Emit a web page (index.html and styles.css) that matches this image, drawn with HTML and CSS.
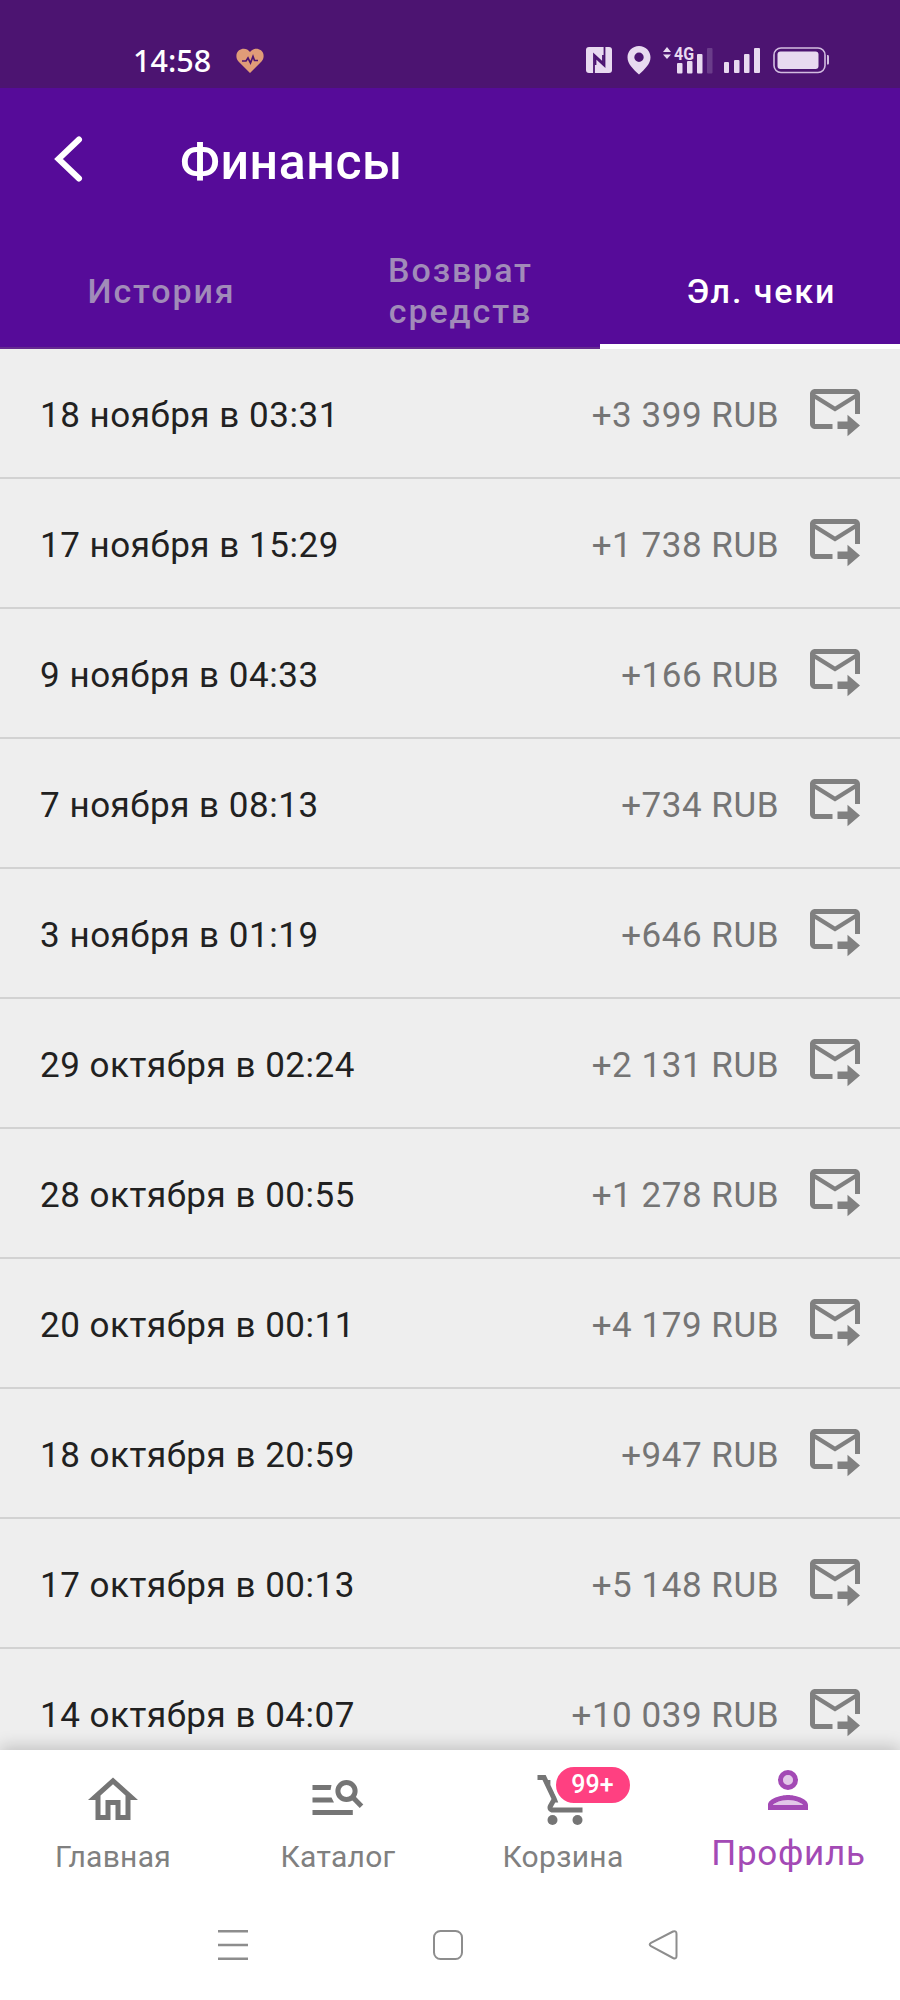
FILE: index.html
```html
<!DOCTYPE html>
<html lang="ru">
<head>
<meta charset="utf-8">
<title>Финансы</title>
<link rel="stylesheet" href="styles.css">
</head>
<body>
<svg class="defs" aria-hidden="true">
  <symbol id="mail" viewBox="0 0 24 24">
    <path d="M20 4H4C2.9 4 2 4.900 2 6V18C2 19.100 2.900 20 4 20H11V18H4V8L12 13L20 8V14H22V6C22 4.900 21.100 4 20 4ZM12 11L4 6H20ZM17 14.300L22 18.600L17 22.900V20H13V17H17Z"/>
  </symbol>
</svg>
<div class="screen">
  <header class="header">
    <div class="status">
      <span class="clock">14:58</span>
      <svg class="heart" width="28" height="26" viewBox="0 0 28 26"><path d="M14 25L2.500 13.500C-.500 10-.300 5 3 2.300C6.500-.400 11.500.300 14 4C16.500.300 21.500-.400 25 2.300C28.300 5 28.500 10 25.500 13.500Z" fill="#e09c78"/><path d="M6 13H10L12 10L14.500 15L17 8.500L18.500 12.500H22" fill="none" stroke="#4c1471" stroke-width="1.700"/></svg>
      <div class="indicators">
        <svg class="nfc" width="26" height="26" viewBox="0 0 26 26"><rect width="26" height="26" rx="3" fill="#e8daf0"/><path d="M8 26V7.500L17 16V8" fill="none" stroke="#4c1471" stroke-width="1.800"/><path d="M18.500 0V19L9.500 10.500V18" fill="none" stroke="#4c1471" stroke-width="1.800"/></svg>
        <svg class="pin" width="24" height="29" viewBox="0 0 24 29"><path fill="#e8daf0" fill-rule="evenodd" d="M12 0C5.400 0 .500 5 .500 11.300C.500 18 6 23 12 28.500C18 23 23.500 18 23.500 11.300C23.500 5 18.600 0 12 0ZM12 6.500A4.700 4.700 0 1 1 12 15.900A4.700 4.700 0 0 1 12 6.500Z"/></svg>
        <svg class="cell" width="52" height="32" viewBox="0 -4 52 32" fill="#e8daf0"><path d="M1 6L5 1L9 6ZM1 8.500H9L5 13Z"/><rect x="15" y="17" width="5.500" height="10.500" rx="1"/><rect x="25" y="15" width="5.500" height="12.500" rx="1"/><rect x="35" y="8" width="5.500" height="19.500" rx="1"/><rect x="45" y="2" width="5.500" height="25.500" rx="1" opacity=".2"/><text class="gen" x="12" y="13.500" textLength="20" lengthAdjust="spacingAndGlyphs">4G</text></svg>
        <svg class="signal" width="36" height="26" viewBox="0 0 36 26" fill="#e8daf0"><rect y="15" width="5" height="11" rx="1"/><rect x="10" y="13" width="5.500" height="13" rx="1"/><rect x="20" y="7" width="5.500" height="19" rx="1"/><rect x="30" y="1" width="6" height="25" rx="1"/></svg>
        <svg class="battery" width="57" height="27" viewBox="0 0 57 27"><rect x="1" y="1" width="51" height="24.500" rx="7" fill="none" stroke="#d2bde0" stroke-width="1.600"/><rect x="4.500" y="4.500" width="41" height="17.500" rx="3" fill="#e8daf0"/><path d="M54 8H55Q56 8 56 9.500V16Q56 17.500 55 17.500H54Z" fill="#d2bde0"/></svg>
      </div>
    </div>
    <div class="titlebar">
      <svg class="back" width="30" height="48" viewBox="0 0 30 48"><path d="M25 4.500L4.500 24L25 43.500" fill="none" stroke="#fff" stroke-width="6" stroke-linecap="round"/></svg>
      <h1 class="title">Финансы</h1>
    </div>
    <nav class="tabs">
      <div class="tab">История</div>
      <div class="tab tab-wide">Возврат<br>средств</div>
      <div class="tab tab-active">Эл. чеки</div>
    </nav>
  </header>
  <main class="list">
    <div class="row"><span class="date">18 ноября в 03:31</span><span class="sum">+3 399 RUB</span><svg class="mail"><use href="#mail"/></svg></div>
    <div class="row"><span class="date">17 ноября в 15:29</span><span class="sum">+1 738 RUB</span><svg class="mail"><use href="#mail"/></svg></div>
    <div class="row"><span class="date">9 ноября в 04:33</span><span class="sum">+166 RUB</span><svg class="mail"><use href="#mail"/></svg></div>
    <div class="row"><span class="date">7 ноября в 08:13</span><span class="sum">+734 RUB</span><svg class="mail"><use href="#mail"/></svg></div>
    <div class="row"><span class="date">3 ноября в 01:19</span><span class="sum">+646 RUB</span><svg class="mail"><use href="#mail"/></svg></div>
    <div class="row"><span class="date">29 октября в 02:24</span><span class="sum">+2 131 RUB</span><svg class="mail"><use href="#mail"/></svg></div>
    <div class="row"><span class="date">28 октября в 00:55</span><span class="sum">+1 278 RUB</span><svg class="mail"><use href="#mail"/></svg></div>
    <div class="row"><span class="date">20 октября в 00:11</span><span class="sum">+4 179 RUB</span><svg class="mail"><use href="#mail"/></svg></div>
    <div class="row"><span class="date">18 октября в 20:59</span><span class="sum">+947 RUB</span><svg class="mail"><use href="#mail"/></svg></div>
    <div class="row"><span class="date">17 октября в 00:13</span><span class="sum">+5 148 RUB</span><svg class="mail"><use href="#mail"/></svg></div>
    <div class="row"><span class="date">14 октября в 04:07</span><span class="sum">+10 039 RUB</span><svg class="mail"><use href="#mail"/></svg></div>
  </main>
  <footer class="footer">
    <nav class="menu">
      <div class="item">
        <svg class="icon" viewBox="0 0 24 24"><path d="M12 5.690L17 10.190V18H15V12H9V18H7V10.190L12 5.690M12 3L2 12H5V20H11V14H13V20H19V12H22Z"/></svg>
        <span class="label">Главная</span>
      </div>
      <div class="item">
        <svg class="icon" viewBox="0 0 60 60"><path d="M4.500 15H23.500L22.500 20H4.500ZM4.500 27.500H23.500L26 32.500H4.500ZM4.500 40H44.800V45H4.500Z"/><circle cx="38.500" cy="21" r="8.600" fill="none" stroke="#757575" stroke-width="5"/><path d="M44.500 27L53.500 36.200" stroke="#757575" stroke-width="5"/></svg>
        <span class="label">Каталог</span>
      </div>
      <div class="item">
        <div class="cart">
          <svg class="icon" viewBox="0 0 24 24"><path d="M5.210 4L4.270 2H1V4H3L6.600 11.590L5.250 14.030C4.520 15.370 5.480 17 7 17H19V15H7L8.100 13H9.300L8.530 11L6.160 6V4Z"/><circle cx="7" cy="20" r="2"/><circle cx="17" cy="20" r="2"/></svg>
          <span class="badge">99+</span>
        </div>
        <span class="label">Корзина</span>
      </div>
      <div class="item item-active">
        <svg class="icon" viewBox="0 0 24 24"><g opacity=".3"><circle cx="12" cy="8" r="2"/><path d="M6 18C6.220 17.280 9.310 16 12 16C14.700 16 17.800 17.290 18 18Z"/></g><path fill-rule="evenodd" d="M12 4A4 4 0 1 0 12 12A4 4 0 0 0 12 4ZM12 6A2 2 0 1 1 12 10A2 2 0 0 1 12 6ZM12 14C9.330 14 4 15.340 4 18V20H20V18C20 15.340 14.670 14 12 14ZM6 18C6.220 17.280 9.310 16 12 16C14.700 16 17.800 17.290 18 18Z"/></svg>
        <span class="label">Профиль</span>
      </div>
    </nav>
    <div class="system">
      <svg width="30" height="30" viewBox="0 0 30 30"><path d="M0 1.300H30M0 15H30M0 28.700H30" stroke="#8d8d8d" stroke-width="2.500"/></svg>
      <svg width="30" height="30" viewBox="0 0 30 30"><rect x="1" y="1" width="28" height="28" rx="6.500" fill="none" stroke="#8d8d8d" stroke-width="2"/></svg>
      <svg width="30" height="30" viewBox="0 0 30 30"><path d="M25 1.500L3 12.800Q.400 14.500 3 16.200L25 28Q28.500 29.500 28.500 26V4Q28.500 .200 25 1.500Z" fill="none" stroke="#8d8d8d" stroke-width="2"/></svg>
    </div>
  </footer>
</div>
</body>
</html>
```
FILE: styles.css
```css
* { box-sizing: border-box; }
body { margin: 0; font-family: Roboto, "Liberation Sans", sans-serif; background: #fff; }
svg { display: block; flex: none; }
.defs { position: absolute; width: 0; height: 0; }
.screen { display: flex; flex-direction: column; width: 900px; height: 2000px; overflow: hidden; }
.header { flex: none; height: 349px; background: #560b99; display: flex; flex-direction: column; }

.status { height: 88px; flex: none; background: #4c1471; display: flex; align-items: flex-start; padding: 45px 71px 0 133px; }
.clock { font: 500 30.500px/30px "Noto Sans", sans-serif; color: #fff; width: 103px; }
.heart { margin-top: 3px; }
.indicators { display: flex; align-items: flex-start; margin: 1px 0 0 auto; }
.nfc { margin-top: 1px; }
.pin { margin-left: 15px; }
.cell { margin: -4px 0 0 11px; overflow: visible; }
.gen { font: 700 18px Roboto, sans-serif; }
.signal { margin: 1px 0 0 10px; }
.battery { margin: 1px -1px 0 13px; }

.titlebar { height: 140px; flex: none; display: flex; align-items: flex-start; padding: 47px 0 0 54px; }
.title { margin: 1px 0 0 96px; font-size: 50px; line-height: 52px; font-weight: 500; color: #fff; letter-spacing: .600px; }

.tabs { flex: 1; display: grid; grid-template-columns: repeat(3, 300px); border-bottom: 2px solid #652a8f; }
.tab { display: flex; align-items: center; justify-content: center; text-align: center; padding: 7px 0 0 23px; font-size: 34px; line-height: 41px; font-weight: 500; letter-spacing: 1.900px; color: #a18bb9; }
.tab-wide { padding-left: 21px; }
.tab-active { color: #fff; border-bottom: 5px solid #fff; margin-bottom: -2px; padding-top: 10px; }

.list { flex: 1; min-height: 0; overflow: hidden; background: #eee; }
.row { height: 130px; display: flex; align-items: center; padding: 0 35px 0 40px; border-bottom: 2px solid #d2d2d2; font-size: 35px; line-height: 42px; letter-spacing: .530px; }
.date { color: #212121; margin-top: 5px; }
.sum { color: #757575; margin: 5px 26px 0 auto; }
.mail { width: 60px; height: 60px; fill: #808080; margin-top: -9px; }

.footer { position: relative; flex: none; height: 250px; background: #fff; box-shadow: 0 -3px 16px rgba(0, 0, 0, .2); }
.menu { display: grid; grid-template-columns: repeat(4, 225px); height: 150px; }
.item { display: flex; flex-direction: column; align-items: center; padding-top: 20px; color: #808080; }
.icon { width: 60px; height: 60px; fill: #757575; }
.label { margin: 9px 0 0 1px; font-size: 30px; line-height: 36px; letter-spacing: .300px; }
.item-active { padding-top: 10px; color: #a34ab5; }
.item-active .icon { fill: #a34ab5; }
.item-active .label { margin: 13px 0 0 2px; font-size: 35px; line-height: 42px; letter-spacing: .700px; }
.cart { position: relative; left: 2px; }
.badge { position: absolute; left: 18px; top: -6px; width: 80px; height: 42px; border: 3px solid #fff; border-radius: 21px; background: #ff4081; color: #fff; font-size: 25px; line-height: 36px; font-weight: 500; text-align: center; }
.system { display: flex; justify-content: space-between; padding: 30px 222px 0 218px; }
```
